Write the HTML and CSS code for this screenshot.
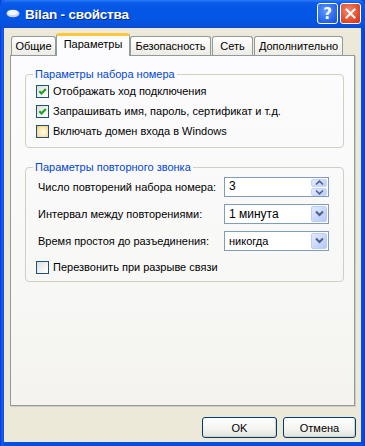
FILE: index.html
```html
<!DOCTYPE html>
<html lang="ru">
<head>
    <meta charset="UTF-8">
    <title>Bilan - свойства</title>
    <link rel="stylesheet" href="styles.css">
</head>
<body>
    <div class="window">
        <div class="titlebar">
            <svg class="app-icon" width="14" height="10" viewBox="0 0 14 10">
                <ellipse cx="7" cy="5.5" rx="6.5" ry="3.8" fill="#c9d3e4"/>
                <ellipse cx="6.5" cy="4.5" rx="5" ry="2.6" fill="#f4f6fb"/>
            </svg>
            <span class="title">Bilan - свойства</span>
            <div class="caption-btns">
                <div class="cap-btn help">?</div>
                <div class="cap-btn close">
                    <svg width="11" height="11" viewBox="0 0 11 11">
                        <path d="M1.5 1.5 L9.5 9.5 M9.5 1.5 L1.5 9.5" stroke="#fff" stroke-width="2" stroke-linecap="square"/>
                    </svg>
                </div>
            </div>
        </div>
        <div class="client">
            <div class="tabs">
                <div class="tab w1">Общие</div>
                <div class="tab active w2">Параметры</div>
                <div class="tab w3">Безопасность</div>
                <div class="tab w4">Сеть</div>
                <div class="tab w5">Дополнительно</div>
            </div>
            <div class="panel">
                <fieldset class="group g1">
                    <legend>Параметры набора номера</legend>
                    <div class="check"><span class="box checked"><svg width="11" height="11" viewBox="0 0 11 11"><path d="M2.3 5.2 L4.5 7.4 L8.8 3" stroke="#21a121" stroke-width="2.2" fill="none"/></svg></span>Отображать ход подключения</div>
                    <div class="check"><span class="box checked"><svg width="11" height="11" viewBox="0 0 11 11"><path d="M2.3 5.2 L4.5 7.4 L8.8 3" stroke="#21a121" stroke-width="2.2" fill="none"/></svg></span>Запрашивать имя, пароль, сертификат и т.д.</div>
                    <div class="check"><span class="box hot"></span>Включать домен входа в Windows</div>
                </fieldset>
                <fieldset class="group g2">
                    <legend>Параметры повторного звонка</legend>
                    <div class="field">
                        <span class="label">Число повторений набора номера:</span>
                        <div class="input spin">
                            <span class="value">3</span>
                            <div class="spin-btns">
                                <div class="arrow-btn"><svg width="9" height="6" viewBox="0 0 9 6"><path d="M1 4.5 L4.5 1.2 L8 4.5" stroke="#4d6185" stroke-width="1.6" fill="none"/></svg></div>
                                <div class="arrow-btn"><svg width="9" height="6" viewBox="0 0 9 6"><path d="M1 1.5 L4.5 4.8 L8 1.5" stroke="#4d6185" stroke-width="1.6" fill="none"/></svg></div>
                            </div>
                        </div>
                    </div>
                    <div class="field">
                        <span class="label">Интервал между повторениями:</span>
                        <div class="input combo">
                            <span class="value big">1 минута</span>
                            <div class="drop-btn"><svg width="9" height="7" viewBox="0 0 9 7"><path d="M1 1.5 L4.5 5 L8 1.5" stroke="#4d6185" stroke-width="2" fill="none"/></svg></div>
                        </div>
                    </div>
                    <div class="field">
                        <span class="label">Время простоя до разъединения:</span>
                        <div class="input combo">
                            <span class="value">никогда</span>
                            <div class="drop-btn"><svg width="9" height="7" viewBox="0 0 9 7"><path d="M1 1.5 L4.5 5 L8 1.5" stroke="#4d6185" stroke-width="2" fill="none"/></svg></div>
                        </div>
                    </div>
                    <div class="check last"><span class="box"></span>Перезвонить при разрыве связи</div>
                </fieldset>
            </div>
            <div class="buttons">
                <div class="btn ok">OK</div>
                <div class="btn cancel">Отмена</div>
            </div>
        </div>
    </div>
</body>
</html>
```

FILE: styles.css
```css
* {
    box-sizing: border-box;
}
body {
    margin: 0;
    font-family: "Liberation Sans", Tahoma, sans-serif;
    font-size: 11px;
    color: #000;
}
.window {
    width: 365px;
    height: 446px;
    display: flex;
    flex-direction: column;
    background: linear-gradient(to right, #0831d9 0, #1660f0 2px, #0a4ee0 4px, #0a4ee0 361px, #0840d6 365px);
}
.titlebar {
    height: 28px;
    display: flex;
    align-items: center;
    padding: 0 4px 0 6px;
    background: linear-gradient(#2b7cf8 0, #0a5ae8 3px, #0456e6 10px, #0355e4 20px, #0a4fd9 26px, #0a4ad2 28px);
    border-radius: 6px 6px 0 0;
}
.app-icon {
    margin-right: 5px;
    margin-top: -2px;
}
.title {
    color: #fff;
    font-family: "Liberation Sans", sans-serif;
    font-weight: bold;
    font-size: 13.5px;
    letter-spacing: -0.2px;
    text-shadow: 1px 1px 0 #0a2b8a;
    flex: 1;
}
.caption-btns {
    display: flex;
    gap: 2px;
    margin-top: -1px;
}
.cap-btn {
    width: 21px;
    height: 21px;
    border: 1px solid #fff;
    border-radius: 3px;
    display: flex;
    align-items: center;
    justify-content: center;
}
.help {
    background: radial-gradient(circle at 40% 35%, #5d97ff, #2463e7 70%, #1b4fd0);
    color: #fff;
    font-family: "DejaVu Sans", sans-serif;
    font-weight: bold;
    font-size: 15px;
}
.close {
    background: radial-gradient(circle at 40% 35%, #f08a6e, #e3441f 70%, #c9331a);
}
.client {
    flex: 1;
    margin: 0 4px 4px;
    background: #ece9d8;
    padding: 5px 6px 0;
    display: flex;
    flex-direction: column;
}
.tabs {
    height: 22px;
    display: flex;
    align-items: flex-end;
    padding-left: 1px;
    position: relative;
    z-index: 1;
}
.tab {
    height: 19px;
    border: 1px solid #919b9c;
    border-bottom: none;
    border-radius: 3px 3px 0 0;
    background: linear-gradient(#fefefe, #f4f3ee 60%, #ecebe5);
    text-align: center;
    line-height: 17px;
    padding-top: 1px;
    white-space: nowrap;
}
.tab.active {
    height: 23px;
    margin-bottom: -1px;
    background: #fcfcfe;
    border-top: 3px solid #ffc83c;
    border-radius: 3px 3px 0 0;
    line-height: 16px;
    padding-top: 0;
}
.w1 { width: 45px; }
.w2 { width: 74px; }
.w3 { width: 81px; }
.w4 { width: 41px; margin-left: 1px; }
.w5 { width: 89px; margin-left: 1px; }
.panel {
    flex: 1;
    border: 1px solid #919b9c;
    background: linear-gradient(#fcfcfe, #f7f7f5 70%, #f4f3ee);
    padding: 12px 10px 0 14px;
    box-shadow: 1px 1px 0 #d0cec0;
}
.group {
    margin: 0;
    padding: 0 0 6px 10px;
    border: 1px solid #d0d0bf;
    border-radius: 4px;
    min-width: 0;
}
.group legend {
    color: #0046d5;
    padding: 0 2px;
    margin-left: -3px;
    line-height: 13px;
}
.g2 {
    margin-top: 13px;
    padding-top: 2px;
    padding-bottom: 4px;
}
.check {
    height: 20px;
    display: flex;
    align-items: center;
    white-space: nowrap;
}
.check.last {
    margin-top: 6px;
}
.box {
    width: 13px;
    height: 13px;
    border: 1px solid #1c5180;
    background: linear-gradient(135deg, #dcdcd7, #fbfbfa 80%, #fff);
    margin-right: 4px;
    flex: none;
    display: flex;
}
.box.hot {
    background: radial-gradient(circle at 55% 55%, #fffdf0 0, #fbe7ae 55%, #f5c65e 100%);
}
.field {
    height: 21px;
    display: flex;
    align-items: center;
    padding-left: 2px;
    margin-bottom: 6px;
    white-space: nowrap;
}
.label {
    width: 186px;
    flex: none;
}
.input {
    width: 105px;
    height: 20px;
    border: 1px solid #7f9db9;
    background: #fff;
    display: flex;
    align-items: center;
    padding: 1px;
}
.value {
    flex: 1;
    padding-left: 3px;
}
.value.big {
    font-size: 12px;
}
.spin .value {
    align-self: flex-start;
    font-size: 12px;
}
.spin-btns {
    width: 16px;
    height: 100%;
    display: flex;
    flex-direction: column;
    gap: 1px;
}
.arrow-btn {
    flex: 1;
    border-radius: 2px;
    background: linear-gradient(135deg, #e2eafe, #bccefa);
    border: 1px solid #c3d3fd;
    display: flex;
    align-items: center;
    justify-content: center;
}
.drop-btn {
    width: 16px;
    height: 100%;
    border-radius: 2px;
    background: linear-gradient(135deg, #e2eafe, #b5c8f8);
    border: 1px solid #bccdf9;
    display: flex;
    align-items: center;
    justify-content: center;
}
.buttons {
    display: flex;
    justify-content: flex-end;
    gap: 6px;
    margin: 11px -1px 4px 0;
}
.btn {
    height: 21px;
    border: 1px solid #003c74;
    border-radius: 3px;
    background: linear-gradient(#fff, #f3f3ef 60%, #e3e2da);
    box-shadow: inset -1px -1px 0 #d6d0c5;
    display: flex;
    align-items: center;
    justify-content: center;
}
.ok { width: 75px; }
.cancel { width: 73px; }
```
